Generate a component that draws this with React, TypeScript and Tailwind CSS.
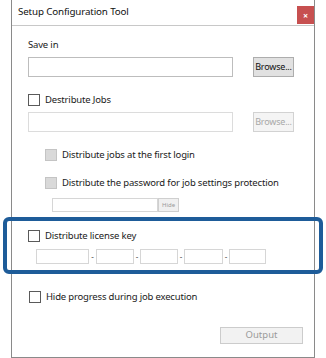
const font = { fontFamily: '"Noto Sans", "Open Sans", sans-serif' };

function Check({ disabled = false }: { disabled?: boolean }) {
  return (
    <span
      className={`inline-block w-[12px] h-[12px] shrink-0 border ${
        disabled ? 'bg-[#d9d9d9] border-[#c4c4c4]' : 'bg-white border-[#5a5a5a]'
      }`}
    />
  );
}

function CheckRow({ label, disabled = false, className = '' }: { label: string; disabled?: boolean; className?: string }) {
  return (
    <div className={`flex items-center gap-[5px] h-[14px] ${className}`}>
      <Check disabled={disabled} />
      <span className="text-[9.5px] tracking-[-0.17px] leading-[14px] text-[#1a1a1a]">{label}</span>
    </div>
  );
}

export default function App() {
  const keyWidths = [53, 38, 38, 39, 37];
  const keyGaps = [0, 7, 6, 6, 6];
  return (
    <div className="relative w-[326px] h-[358px] bg-white overflow-hidden" style={font}>
      <div className="ml-[11px] w-[304px] h-[358px] flex flex-col border-x border-b border-[#8a8a8a]">
        <div className="h-[26px] shrink-0 flex items-start justify-between border-b border-[#c8c8c8]">
          <span className="ml-[6px] mt-[5px] text-[9.8px] tracking-[-0.15px] leading-[14px] text-[#111]">Setup Configuration Tool</span>
          <div className="mt-[6px] w-[17px] h-[18px] bg-[#c75050] flex items-center justify-center text-white text-[9px] font-bold leading-none">
            ×
          </div>
        </div>

        <div className="pl-[16px] flex flex-col">
          <span className="mt-[12px] text-[9.5px] tracking-[-0.17px] leading-[14px] text-[#1a1a1a]">Save in</span>
          <div className="mt-[5px] flex items-center">
            <div className="w-[205px] h-[20px] border border-[#bdbdbd] bg-white" />
            <div className="ml-[20px] w-[41px] h-[20px] border border-[#adadad] bg-[#e1e1e1] flex items-center justify-center text-[9px] tracking-[-0.2px] text-[#111]">
              Browse...
            </div>
          </div>

          <CheckRow label="Destribute Jobs" className="mt-[16px]" />
          <div className="mt-[5px] flex items-center">
            <div className="w-[205px] h-[20px] border border-[#dcdcdc] bg-white" />
            <div className="ml-[20px] w-[41px] h-[20px] border border-[#d2d2d2] bg-[#f4f4f4] flex items-center justify-center text-[9px] tracking-[-0.2px] text-[#a8a8a8]">
              Browse...
            </div>
          </div>

          <div className="ml-[17px] flex flex-col">
            <CheckRow label="Distribute jobs at the first login" disabled className="mt-[16px]" />
            <CheckRow label="Distribute the password for job settings protection" disabled className="mt-[14px]" />
            <div className="mt-[8px] ml-[7px] flex">
              <div className="w-[106px] h-[14px] border border-[#d6d6d6] bg-white" />
              <div className="w-[21px] h-[14px] border border-[#cfcfcf] bg-[#f0f0f0] flex items-center justify-center text-[6px] text-[#9a9a9a]">
                Hide
              </div>
            </div>
          </div>

          <CheckRow label="Distribute license key" className="mt-[17px]" />
          <div className="mt-[6px] ml-[8px] flex items-center">
            {keyWidths.map((w, i) => (
              <div key={i} className="flex items-center">
                {i > 0 && (
                  <span className="text-center text-[8px] leading-none text-[#555]" style={{ width: keyGaps[i] }}>
                    -
                  </span>
                )}
                <div className="h-[15px] border border-[#d6d6d6] bg-white" style={{ width: w }} />
              </div>
            ))}
          </div>

          <CheckRow label="Hide progress during job execution" className="mt-[26px] ml-[1px]" />

          <div className="mt-[23px] pr-[11px] flex justify-end">
            <div className="w-[83px] h-[17px] border border-[#cccccc] bg-[#f2f2f2] flex items-center justify-center text-[9.5px] text-[#9a9a9a]">
              Output
            </div>
          </div>
        </div>
      </div>

      <div className="absolute left-[3px] top-[217px] w-[320px] h-[57px] border-[4px] border-[#1e5c99] rounded-[6px] pointer-events-none" />
    </div>
  );
}
